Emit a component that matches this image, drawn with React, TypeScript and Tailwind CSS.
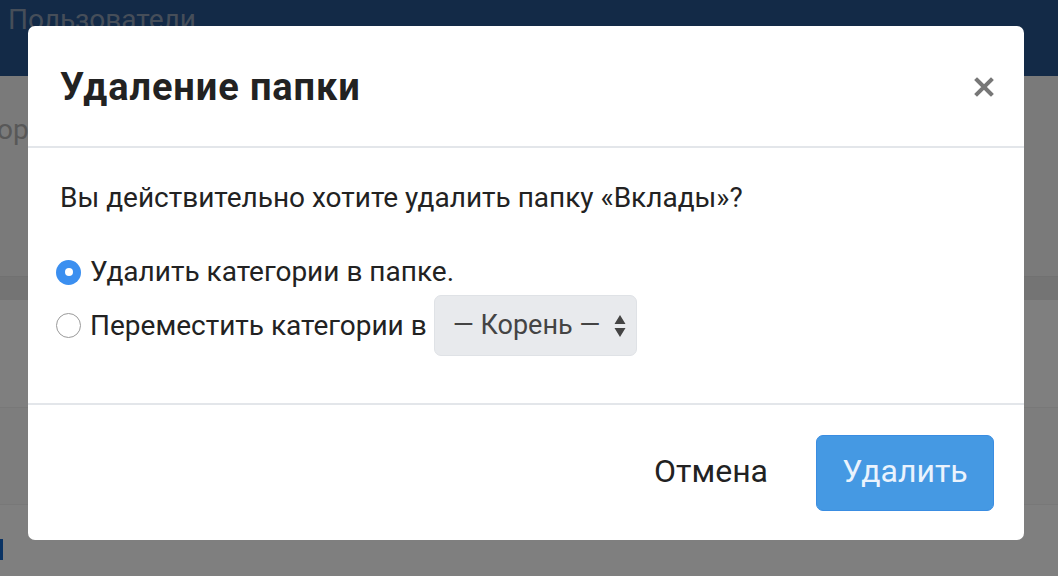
import React from 'react'

const Radio = ({ checked }: { checked?: boolean }) =>
  checked ? (
    <span className="flex h-[25px] w-[25px] shrink-0 items-center justify-center rounded-full bg-[#3b8ff0]">
      <span className="h-[8px] w-[8px] rounded-full bg-white" />
    </span>
  ) : (
    <span className="h-[25px] w-[25px] shrink-0 rounded-full border border-[#9a9a9a] bg-white" />
  )

const App = () => {
  return (
    <div className="relative h-[576px] w-[1058px] overflow-hidden font-['Roboto',sans-serif]">
      {/* page behind the dialog */}
      <div className="flex h-full flex-col bg-white">
        <div className="h-[76px] bg-[#26548f] pl-[8px] text-[28px] leading-[40px] text-[#8d9db3]">Пользователи</div>
        <div className="h-[201px] border-b border-[#e2e2e2] bg-[#f5f5f5] pt-[34px] text-[28px] leading-[40px] text-[#b0b0b0]">
          <span className="-ml-[3px]">ор</span>
        </div>
        <div className="h-[23px] bg-[#e9e9e9]" />
        <div className="h-[108px] border-b border-[#f0f0f0]" />
        <div className="h-[97px] border-b border-[#f0f0f0] bg-[#fbfbfb]" />
        <div className="pt-[34px]">
          <div className="h-[21px] w-[3px] bg-[#1466c8]" />
        </div>
      </div>

      <div className="absolute inset-0 bg-black/50" />

      {/* dialog */}
      <div className="absolute left-[28px] top-[26px] flex h-[514px] w-[996px] flex-col rounded-[7px] bg-white text-[#222]">
        <div className="flex h-[122px] items-center justify-between border-b-2 border-[#e3e6ea] pl-[32px] pr-[30px]">
          <h2 className="pt-[2px] text-[38px] font-bold tracking-[0.9px] text-[#222]">Удаление папки</h2>
          <svg width="20" height="20" viewBox="0 0 20 20" className="mt-[2px]">
            <path d="M3 3 L17 17 M17 3 L3 17" stroke="#777" strokeWidth="4" strokeLinecap="square" />
          </svg>
        </div>

        <div className="flex h-[255px] flex-col pl-[32px] pt-[35px] text-[28px]">
          <p className="leading-[30px]">Вы действительно хотите удалить папку «Вклады»?</p>
          <label className="mt-[44px] -ml-[4px] flex items-center gap-[9px]">
            <Radio checked />
            <span className="leading-[30px]">Удалить категории в папке.</span>
          </label>
          <label className="mt-[8px] -ml-[4px] flex items-center gap-[9px]">
            <Radio />
            <span className="leading-[30px]">Переместить категории в</span>
            <span className="-ml-[2px] flex h-[61px] w-[203px] items-center justify-between rounded-[7px] border border-[#dfe2e6] bg-[#e8eaed] pl-[18px] pr-[10px] text-[27px] text-[#444]">
              <span>— Корень —</span>
              <svg width="12" height="24" viewBox="0 0 12 24">
                <path d="M6 1 L11.5 10 L0.5 10 Z M6 23 L11.5 14 L0.5 14 Z" fill="#444" />
              </svg>
            </span>
          </label>
        </div>

        <div className="flex flex-1 items-center justify-end gap-[48px] border-t-2 border-[#e3e6ea] pr-[30px]">
          <button className="pb-[3px] text-[32px] text-[#222]">Отмена</button>
          <button className="h-[76px] w-[178px] rounded-[7px] border border-[#3a8de2] bg-[#4599e3] pb-[3px] text-[32px] text-[#eaf3fd]">
            Удалить
          </button>
        </div>
      </div>
    </div>
  )
}

export default App
